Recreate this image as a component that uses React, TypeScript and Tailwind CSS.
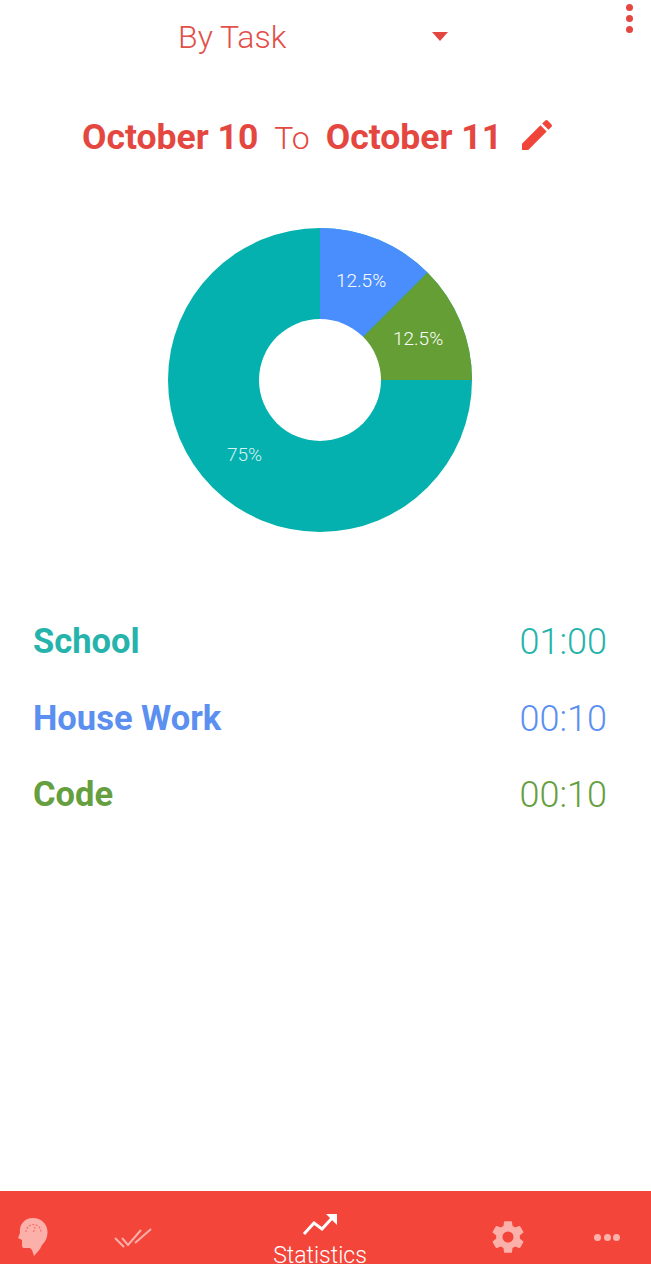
const rows = [
  { name: 'School', time: '01:00', color: 'text-[#26b3ab]' },
  { name: 'House Work', time: '00:10', color: 'text-[#5b90f0]' },
  { name: 'Code', time: '00:10', color: 'text-[#659f3f]' },
]

function Donut() {
  return (
    <div className="relative ml-[167px] w-[306px] h-[306px]">
      <svg width="306" height="306" viewBox="0 0 306 306">
        <circle cx="153" cy="153" r="152" fill="#04b1ae" />
        <path d="M153 153 L153 1 A152 152 0 0 1 260.500 45.500 Z" fill="#4a8efe" />
        <path d="M153 153 L260.500 45.500 A152 152 0 0 1 305 153 Z" fill="#659e34" />
        <circle cx="153" cy="153" r="61" fill="#ffffff" />
      </svg>
      <span className="absolute left-[169px] top-[43px] text-[19px] leading-[22px] font-light text-white">12.5%</span>
      <span className="absolute left-[226px] top-[101px] text-[19px] leading-[22px] font-light text-white">12.5%</span>
      <span className="absolute left-[60px] top-[217px] text-[19px] leading-[22px] font-light text-[#d5f3f2]">75%</span>
    </div>
  )
}

function BrainHead() {
  return (
    <svg width="30" height="38" viewBox="0 0 30 38" fill="#fbb0aa">
      <path d="M15 0C23 0 29.500 6 29.500 14C29.500 20 27 24 24 27L22 31L16 38L14 32L12 30H6C4 30 4 28 4 26V22L0 20L2 15C1 6 7 0 15 0z" />
      <path d="M8 14a7.500 7.500 0 0 1 15 0M15.500 14l1.500-5" fill="none" stroke="#f4453b" strokeWidth="1.200" strokeDasharray="2 1.500" opacity="0.6" />
    </svg>
  )
}

export default function App() {
  return (
    <div className="relative w-[651px] h-[1264px] overflow-hidden bg-white flex flex-col font-['Roboto','Open_Sans',sans-serif]">
      {/* 顶部菜单点 */}
      <div className="absolute right-[18px] top-[4px] flex flex-col gap-[4px]">
        <span className="w-[7px] h-[7px] rounded-full bg-[#e4473f]" />
        <span className="w-[7px] h-[7px] rounded-full bg-[#e4473f]" />
        <span className="w-[7px] h-[7px] rounded-full bg-[#e4473f]" />
      </div>

      <div className="h-[74px] flex items-center pl-[178px]">
        <span className="w-[254px] text-[32px] font-light text-[#e2504a]">By Task</span>
        <svg width="16" height="9" viewBox="0 0 16 9" className="mt-[-2px]">
          <path d="M0 0h16L8 9z" fill="#e4473f" />
        </svg>
      </div>

      <div className="mt-[40px] h-[48px] flex items-center pl-[82px] text-[35.500px] text-[#e4473f]">
        <span className="font-bold">October 10</span>
        <span className="ml-[16px] text-[32px] font-light">To</span>
        <span className="ml-[16px] font-bold">October 11</span>
        <svg width="40" height="40" viewBox="0 0 24 24" className="ml-[15px] mt-[-6px]" fill="#f0453a">
          <path d="M3 17.250V21h3.750L17.810 9.940l-3.750-3.750L3 17.250zM20.710 7.040a1 1 0 0 0 0-1.410l-2.340-2.340a1 1 0 0 0-1.410 0l-1.830 1.830 3.750 3.750 1.830-1.830z" />
        </svg>
      </div>

      <div className="mt-[65px]">
        <Donut />
      </div>

      <div className="mt-[85px] pl-[33px] pr-[44px] flex flex-col gap-[28.500px]">
        {rows.map((row) => (
          <div key={row.name} className={`flex justify-between items-center h-[48px] ${row.color}`}>
            <span className="text-[34.500px] font-bold">{row.name}</span>
            <span className="text-[36px] font-light">{row.time}</span>
          </div>
        ))}
      </div>

      {/* 底部导航 */}
      <div className="absolute inset-x-0 bottom-0 h-[73px] bg-[#f4453b] flex">
        <div className="absolute left-[18px] top-[27px]">
          <BrainHead />
        </div>
        <svg width="40" height="24" viewBox="0 0 40 24" className="absolute left-[112px] top-[36px]" fill="none" stroke="#fbb0aa" strokeWidth="2">
          <path d="M3 11l9 9M10 11l6 7L29 3M23 16L39 2" />
        </svg>
        <div className="absolute left-[240px] w-[160px] top-[22px] flex flex-col items-center">
          <svg width="36" height="23" viewBox="0 0 36 23" fill="none">
            <path d="M2 21l10-11 8 6L31 4" stroke="#ffffff" strokeWidth="3" />
            <path d="M24 1h11v11z" fill="#ffffff" />
          </svg>
          <span className="mt-[6px] text-[23px] leading-[28px] font-light text-white">Statistics</span>
        </div>
        <svg width="38" height="38" viewBox="0 0 24 24" fill="#fbb0aa" className="absolute left-[489px] top-[27px]">
          <path d="M19.430 12.980c.04-.32.070-.64.070-.980s-.030-.660-.070-.980l2.110-1.650a.5.5 0 0 0 .120-.640l-2-3.460a.5.5 0 0 0-.610-.220l-2.490 1a7.300 7.300 0 0 0-1.690-.980l-.380-2.650A.49.49 0 0 0 14 2h-4a.49.49 0 0 0-.490.420l-.380 2.650c-.610.250-1.170.590-1.690.980l-2.490-1a.49.49 0 0 0-.610.220l-2 3.460a.49.49 0 0 0 .120.640l2.110 1.650c-.040.320-.070.650-.070.980s.030.660.070.980l-2.110 1.650a.5.5 0 0 0-.120.640l2 3.460c.120.220.390.300.610.220l2.490-1c.520.400 1.080.730 1.690.980l.380 2.650c.030.240.240.420.490.420h4c.250 0 .460-.180.490-.420l.380-2.650c.610-.250 1.170-.590 1.690-.980l2.490 1c.230.090.490 0 .610-.220l2-3.460a.5.5 0 0 0-.120-.640l-2.110-1.650zM12 15.500a3.500 3.500 0 1 1 0-7 3.500 3.500 0 0 1 0 7z" />
        </svg>
        <div className="absolute left-[594px] top-[43px] flex gap-[2.500px]">
          <span className="w-[7px] h-[7px] rounded-full bg-[#fbb0aa]" />
          <span className="w-[7px] h-[7px] rounded-full bg-[#fbb0aa]" />
          <span className="w-[7px] h-[7px] rounded-full bg-[#fbb0aa]" />
        </div>
      </div>
    </div>
  )
}
